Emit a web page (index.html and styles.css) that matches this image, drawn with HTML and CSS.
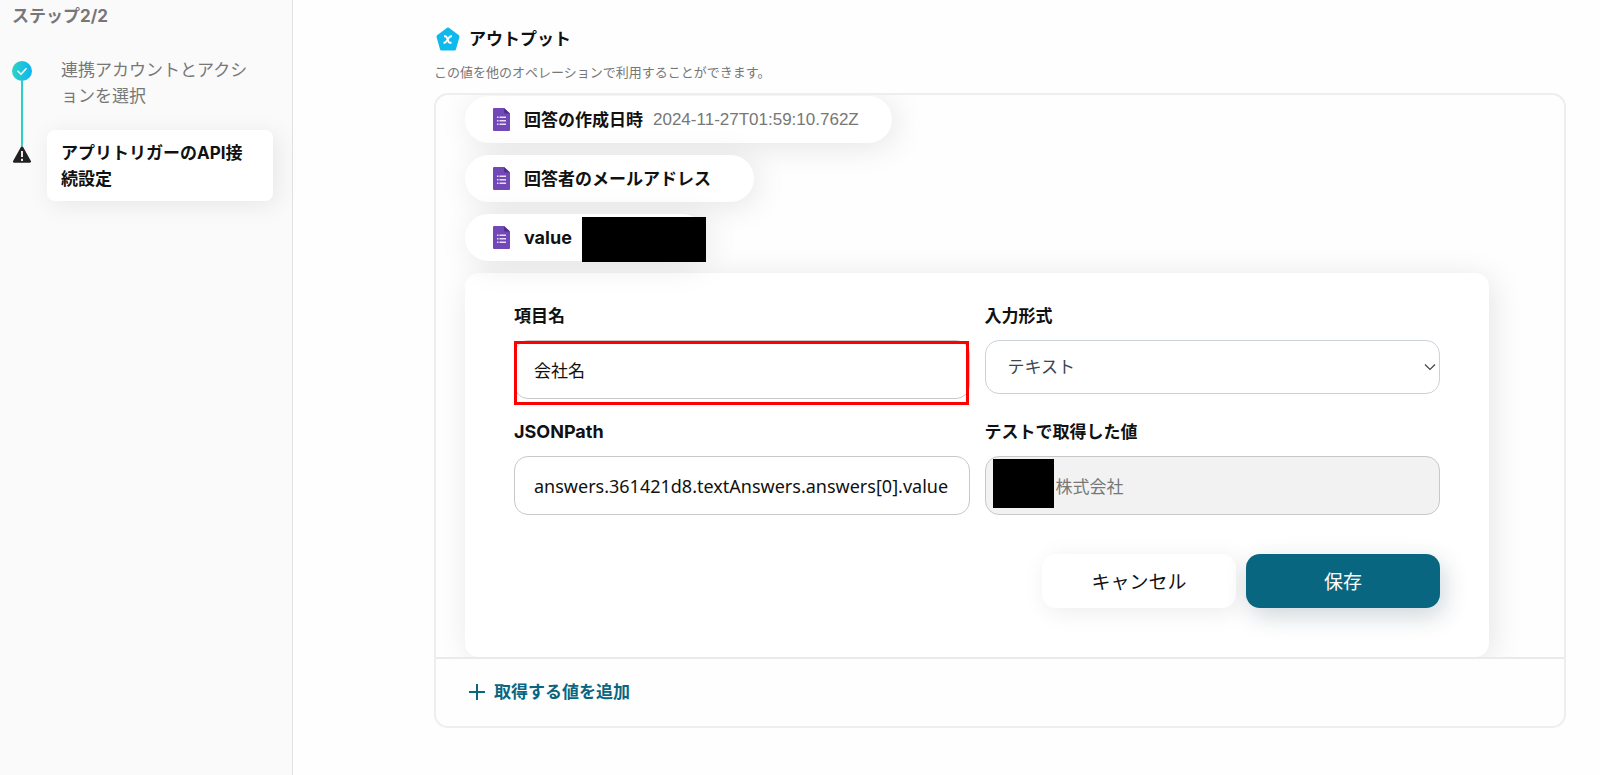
FILE: index.html
```html
<!DOCTYPE html>
<html lang="ja">
<head>
    <meta charset="UTF-8">
    <meta name="viewport" content="width=device-width, initial-scale=1.0">
    <title>アプリトリガーのAPI接続設定</title>
    <link rel="stylesheet" href="styles.css">
</head>
<body>
    <svg class="defs" aria-hidden="true">
        <symbol id="form-icon" viewBox="0 0 17 23">
            <path fill="#7248b9" d="M1 0H11l6 5.500V22A1 1 0 0 1 16 23H1A1 1 0 0 1 0 22V1A1 1 0 0 1 1 0z"/>
            <path fill="#4f2f8c" d="M11 0l6 5.500h-4.500A1.500 1.500 0 0 1 11 4z"/>
            <path fill="#e6dff4" d="M4 8.500h1.500V10H4zM6.500 8.500H13V10H6.500zM4 12h1.500v1.500H4zM6.500 12H13v1.500H6.500zM4 15.500h1.500V17H4zM6.500 15.500H13V17H6.500z"/>
        </symbol>
    </svg>

    <!-- サイドバー -->
    <aside class="sidebar">
        <h2 class="step-count">ステップ2/2</h2>
        <ol class="steps">
            <li class="step step-done">
                <span class="step-mark">
                    <svg width="20" height="20" viewBox="0 0 20 20">
                        <defs>
                            <linearGradient id="done" x1="0" x2="1">
                                <stop offset="0" stop-color="#2bd4c4"/>
                                <stop offset="1" stop-color="#0fb4f0"/>
                            </linearGradient>
                        </defs>
                        <circle cx="10" cy="10" r="10" fill="url(#done)"/>
                        <path d="M5.500 9.800l3.500 3.400 5.500-6" fill="none" stroke="#fff" stroke-width="1.500"/>
                    </svg>
                </span>
                <a class="step-name" href="#">連携アカウントとアクションを選択</a>
            </li>
            <li class="step step-active">
                <span class="step-mark">
                    <svg width="20" height="18" viewBox="0 0 20 18">
                        <path d="M10 1.500l7.800 14H2.200z" fill="#222" stroke="#222" stroke-width="2.500" stroke-linejoin="round"/>
                        <path d="M10 5v6M10 12.800v2.200" stroke="#fff" stroke-width="1.800"/>
                    </svg>
                </span>
                <a class="step-name" href="#">アプリトリガーのAPI接続設定</a>
            </li>
        </ol>
    </aside>

    <!-- メイン -->
    <main class="main">
        <div class="title">
            <svg width="24" height="24" viewBox="0 0 24 24">
                <path d="M12 2l10 7.500-3.500 12.500H5.500L2 9.500z" fill="#10b9ec" stroke="#10b9ec" stroke-width="3" stroke-linejoin="round"/>
                <path d="M8 9.200h1.200c.8 0 1.200.4 1.500 1.100l1.800 4.400c.3.700.700 1.100 1.500 1.100h1.500M16 9.200h-.8c-.8 0-1.300.4-1.800 1l-3.500 4.600c-.5.600-1 1-1.800 1h-.6" fill="none" stroke="#fff" stroke-width="1.900"/>
            </svg>
            <h1>アウトプット</h1>
        </div>
        <p class="description">この値を他のオペレーションで利用することができます。</p>

        <section class="panel">
            <div class="outputs">
                <div class="output">
                    <svg width="17" height="23"><use href="#form-icon"/></svg>
                    <span class="output-name">回答の作成日時</span>
                    <span class="output-value">2024-11-27T01:59:10.762Z</span>
                </div>
                <div class="output">
                    <svg width="17" height="23"><use href="#form-icon"/></svg>
                    <span class="output-name">回答者のメールアドレス</span>
                    <span class="output-value"></span>
                </div>
                <div class="output output-masked">
                    <svg width="17" height="23"><use href="#form-icon"/></svg>
                    <span class="output-name latin">value</span>
                    <span class="mask mask-output"></span>
                </div>

                <form class="editor">
                    <div class="fields">
                        <div class="field">
                            <label for="item-name">項目名</label>
                            <div class="control">
                                <input type="text" id="item-name" value="会社名">
                                <span class="highlight"></span>
                            </div>
                        </div>
                        <div class="field">
                            <label for="item-type">入力形式</label>
                            <div class="control">
                                <select id="item-type">
                                    <option>テキスト</option>
                                </select>
                                <svg class="chevron" width="12" height="8" viewBox="0 0 12 8">
                                    <path d="M1 1.500l5 5 5-5" fill="none" stroke="#444" stroke-width="1.200"/>
                                </svg>
                            </div>
                        </div>
                        <div class="field">
                            <label for="json-path" class="latin">JSONPath</label>
                            <input type="text" id="json-path" class="path-input" value="answers.361421d8.textAnswers.answers[0].value">
                        </div>
                        <div class="field">
                            <label for="test-value">テストで取得した値</label>
                            <div class="control">
                                <input type="text" id="test-value" class="masked-input" value="株式会社" disabled>
                                <span class="mask mask-input"></span>
                            </div>
                        </div>
                    </div>
                    <div class="actions">
                        <button type="button" class="btn">キャンセル</button>
                        <button type="button" class="btn btn-primary">保存</button>
                    </div>
                </form>
            </div>
            <div class="panel-footer">
                <button type="button" class="add">
                    <svg width="16" height="16" viewBox="0 0 16 16">
                        <path d="M8 0v16M0 8h16" stroke="#086680" stroke-width="2"/>
                    </svg>
                    取得する値を追加
                </button>
            </div>
        </section>
    </main>
</body>
</html>
```
FILE: styles.css
```css
* {
    box-sizing: border-box;
}

body {
    margin: 0;
    display: flex;
    min-height: 100vh;
    font-family: Inter, "Noto Sans CJK JP", sans-serif;
    font-size: 17px;
    line-height: 26px;
    color: #111;
    background-color: #fefefe;
}

h1,
h2,
p,
ol {
    margin: 0;
    padding: 0;
}

h1,
h2 {
    font-size: 17px;
}

button,
input,
select {
    font: inherit;
    color: inherit;
}

.defs {
    position: absolute;
    width: 0;
    height: 0;
}

.latin {
    font-size: 18px;
}

/* サイドバー */
.sidebar {
    width: 293px;
    flex-shrink: 0;
    padding: 3px 19px 0 12px;
    background-color: #fafafa;
    border-right: 1px solid #e2e2e2;
}

.step-count {
    color: #777;
}

.steps {
    list-style: none;
    margin-top: 20px;
}

.step {
    display: flex;
    gap: 15px;
}

.step-mark {
    display: flex;
    flex-direction: column;
    align-items: center;
    width: 20px;
    padding-top: 12px;
}

.step-mark svg {
    flex-shrink: 0;
}

.step-done .step-mark::after {
    content: "";
    flex: 1;
    width: 2px;
    background-color: #2bd0cc;
}

.step-active .step-mark {
    padding-top: 0;
}

.step-name {
    flex: 1;
    padding: 8px 14px;
    color: #777;
    text-decoration: none;
}

.step-done .step-name {
    padding-bottom: 37px;
}

.step-active .step-name {
    margin-top: -16px;
    padding: 10px 14px 9px;
    color: #111;
    font-weight: bold;
    background-color: #fff;
    border-radius: 8px;
    box-shadow: 4px 4px 24px rgba(0, 0, 0, 0.08);
}

/* メイン */
.main {
    flex: 1;
    padding: 26px 34px 48px 141px;
}

.title {
    display: flex;
    align-items: center;
    gap: 9px;
    padding-left: 2px;
}

.description {
    margin-top: 7px;
    font-size: 13px;
    color: #777;
}

.panel {
    margin-top: 8px;
    border: 2px solid #eee;
    border-radius: 14px;
    overflow: hidden;
}

.outputs {
    display: flex;
    flex-direction: column;
    align-items: flex-start;
    gap: 12px;
    padding: 1px 75px 0 29px;
}

.output {
    position: relative;
    display: flex;
    align-items: center;
    height: 47px;
    padding: 0 33px 0 28px;
    background-color: #fff;
    border-radius: 24px;
    box-shadow: 4px 4px 32px rgba(0, 0, 0, 0.1);
}

.output-name {
    margin-left: 14px;
    font-weight: bold;
}

.output-value {
    margin-left: 10px;
    font-family: "Liberation Sans", "Noto Sans CJK JP", sans-serif;
    color: #777;
}

.output-masked {
    padding-right: 134px;
}

.mask {
    position: absolute;
    background-color: #000;
}

.mask-output {
    left: 117px;
    top: 3px;
    width: 124px;
    height: 45px;
}

.mask-input {
    left: 8px;
    top: 3px;
    width: 61px;
    height: 49px;
}

/* 編集フォーム */
.editor {
    align-self: stretch;
    padding: 30px 49px 49px;
    background-color: #fff;
    border-radius: 14px;
    box-shadow: 4px 4px 32px rgba(0, 0, 0, 0.1);
}

.fields {
    display: grid;
    grid-template-columns: 1fr 1fr;
    gap: 20px 15px;
}

.field label {
    display: block;
    margin-bottom: 11px;
    font-weight: bold;
}

.control {
    position: relative;
}

.field input,
.field select {
    display: block;
    width: 100%;
    height: 59px;
    padding: 0 19px;
    background-color: #fff;
    border: 1px solid #c8c8c8;
    border-radius: 14px;
}

.field select {
    height: 54px;
    padding: 0 22px;
    color: #3c4650;
    border-color: #ccd2da;
    appearance: none;
}

.field .path-input {
    font-family: "Noto Sans", "Noto Sans CJK JP", sans-serif;
    font-size: 18px;
}

.chevron {
    position: absolute;
    right: 4px;
    top: 23px;
}

.field .masked-input {
    padding-left: 70px;
    color: #777;
    background-color: #f2f2f2;
}

.highlight {
    position: absolute;
    inset: 1px 1px -6px 0;
    border: 3px solid #f00;
    pointer-events: none;
}

.actions {
    display: flex;
    justify-content: flex-end;
    gap: 10px;
    margin-top: 39px;
}

.btn {
    width: 194px;
    height: 54px;
    padding: 3px 0 0;
    font-size: 19px;
    background-color: #fff;
    border: none;
    border-radius: 14px;
    box-shadow: 4px 4px 24px rgba(0, 0, 0, 0.08);
    cursor: pointer;
}

.btn-primary {
    color: #fff;
    background-color: #086680;
    box-shadow: 4px 8px 24px rgba(8, 50, 70, 0.2);
}

.panel-footer {
    position: relative;
    padding: 20px 33px 21px;
    background-color: #fefefe;
    border-top: 2px solid #eaeaea;
}

.add {
    display: flex;
    align-items: center;
    gap: 9px;
    padding: 0;
    font-weight: bold;
    color: #086680;
    background: none;
    border: none;
    cursor: pointer;
}
```
